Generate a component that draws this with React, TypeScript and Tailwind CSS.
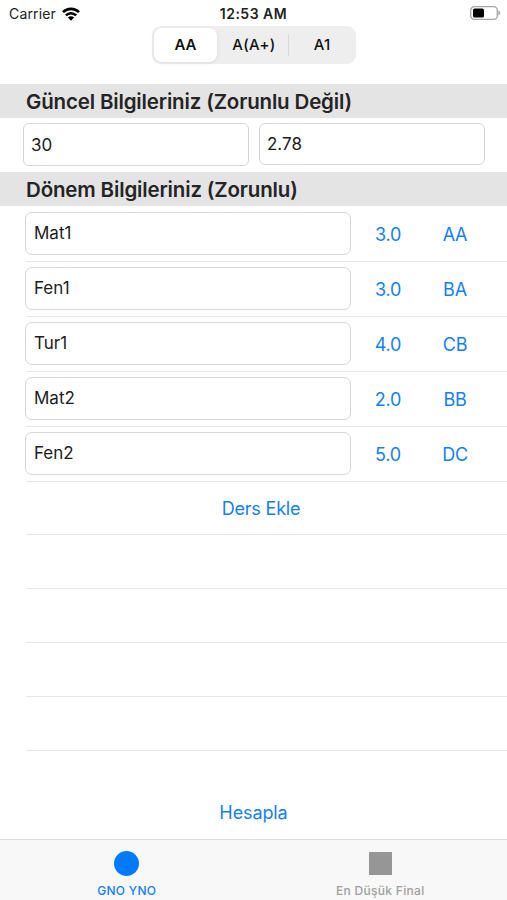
const courses = [
  { name: 'Mat1', credit: '3.0', grade: 'AA' },
  { name: 'Fen1', credit: '3.0', grade: 'BA' },
  { name: 'Tur1', credit: '4.0', grade: 'CB' },
  { name: 'Mat2', credit: '2.0', grade: 'BB' },
  { name: 'Fen2', credit: '5.0', grade: 'DC' },
];

const emptyRows = [1, 2, 3, 4];

function StatusBar() {
  return (
    <div className="grid h-[26px] grid-cols-3 items-center pl-[9px] pr-[6px] text-[#222]">
      <div className="flex items-center gap-[6px] pt-px">
        <span className="text-[14px] leading-none tracking-[0.15px]">Carrier</span>
        <svg width="18" height="14" viewBox="0 0 18 14" fill="none" stroke="#000" strokeWidth="2.6">
          <path d="M1 5.2a11.3 11.3 0 0 1 16 0" />
          <path d="M3.9 8.3a7.2 7.2 0 0 1 10.2 0" />
          <path d="M9 13.8 5.9 10.6a4.4 4.4 0 0 1 6.2 0z" fill="#000" stroke="none" />
        </svg>
      </div>
      <span className="-ml-[3px] whitespace-nowrap pt-[2px] text-center text-[14px] font-semibold leading-none tracking-[0.5px]">
        12:53 AM
      </span>
      <div className="flex justify-end">
        <svg width="31" height="14" viewBox="0 0 31 14">
          <rect x="0.7" y="0.7" width="26.6" height="12.6" rx="3.6" fill="#fff" stroke="#a6a6a6" strokeWidth="1.3" />
          <rect x="3" y="2.6" width="11" height="9" rx="1.6" fill="#000" />
          <path d="M28.3 4.6v4.8c1.1-.4 1.9-1.3 1.9-2.4s-.8-2-1.9-2.4z" fill="#a6a6a6" />
        </svg>
      </div>
    </div>
  );
}

function SectionTitle({ title }: { title: string }) {
  return (
    <h2 className="flex h-[34px] items-center bg-[#e4e4e4] pl-[26px] pt-[2px] text-[20.5px] font-semibold tracking-[-0.16px] text-[#242424]">
      {title}
    </h2>
  );
}

export default function App() {
  return (
    <div
      className="flex h-[900px] w-[507px] flex-col overflow-hidden bg-white text-[#1c1c1c]"
      style={{ fontFamily: 'Inter, "Liberation Sans", sans-serif' }}
    >
      <StatusBar />

      {/* Not sistemi */}
      <div className="mx-auto flex h-[38px] w-[204px] items-center rounded-[9px] bg-[#eeeeee] p-[2px] text-[15px] font-medium text-[#111]">
        <div className="flex h-[34px] w-[63px] items-center justify-center rounded-[8px] bg-white pl-px pt-px font-semibold shadow-[0_1px_4px_rgba(0,0,0,0.08)]">
          AA
        </div>
        <div className="flex-1 pl-[4px] pt-px text-center tracking-[0.3px]">A(A+)</div>
        <div className="h-[22px] w-px bg-[#d9d9d9]" />
        <div className="w-[65px] pl-[2px] pt-px text-center">A1</div>
      </div>

      <div className="mt-[20px]">
        <SectionTitle title="Güncel Bilgileriniz (Zorunlu Değil)" />
      </div>
      <div className="flex h-[54px] gap-[10px] pl-[23px] pt-[5px] text-[17px]">
        <div className="flex h-[43px] w-[226px] items-center rounded-[6px] border-[1.5px] border-[#d6d6d6] pl-[7px] pt-[2px]">30</div>
        <div className="flex h-[42px] w-[226px] items-center rounded-[6px] border-[1.5px] border-[#d6d6d6] pl-[7px] pt-px">2.78</div>
      </div>
      <SectionTitle title="Dönem Bilgileriniz (Zorunlu)" />

      {/* Dersler */}
      <div className="pl-[26px] pt-px">
        {courses.map((course) => (
          <div
            key={course.name}
            className="flex h-[55px] items-center border-b border-[#e6e6e6] text-[18px] tracking-[-0.2px] text-[#147efb]"
          >
            <div className="-ml-px -mt-px flex h-[43px] w-[326px] items-center rounded-[7px] border-[1.5px] border-[#d6d6d6] pl-2 text-[17px] tracking-normal text-[#1c1c1c]">
              {course.name}
            </div>
            <div className="w-[74px] pt-px text-center">{course.credit}</div>
            <div className="w-[60px] pt-px text-center">{course.grade}</div>
          </div>
        ))}
        <div className="flex h-[53px] items-center justify-center border-b border-[#e6e6e6] pr-[11px] pt-px text-[18px] tracking-[-0.2px] text-[#147efb]">
          Ders Ekle
        </div>
        {emptyRows.map((row) => (
          <div key={row} className="h-[54px] border-b border-[#e6e6e6]" />
        ))}
      </div>

      <div className="mt-auto flex h-[55px] justify-center text-[18px] tracking-[-0.1px] text-[#147efb]">
        <span className="h-fit pt-[15px]">Hesapla</span>
      </div>

      {/* Sekmeler */}
      <div className="grid h-[61px] grid-cols-2 border-t border-[#dcdcdc] bg-[#f8f8f8] text-[12px] font-medium tracking-[0.3px]">
        <div className="flex flex-col items-center pt-[11px] text-[#147efb]">
          <div className="h-[25px] w-[25px] rounded-full bg-[#007aff]" />
          <span className="mt-[6px]">GNO YNO</span>
        </div>
        <div className="flex flex-col items-center pt-[12px] text-[#a0a0a0]">
          <div className="h-[23px] w-[23px] bg-[#969696]" />
          <span className="mt-[7px]">En Düşük Final</span>
        </div>
      </div>
    </div>
  );
}
